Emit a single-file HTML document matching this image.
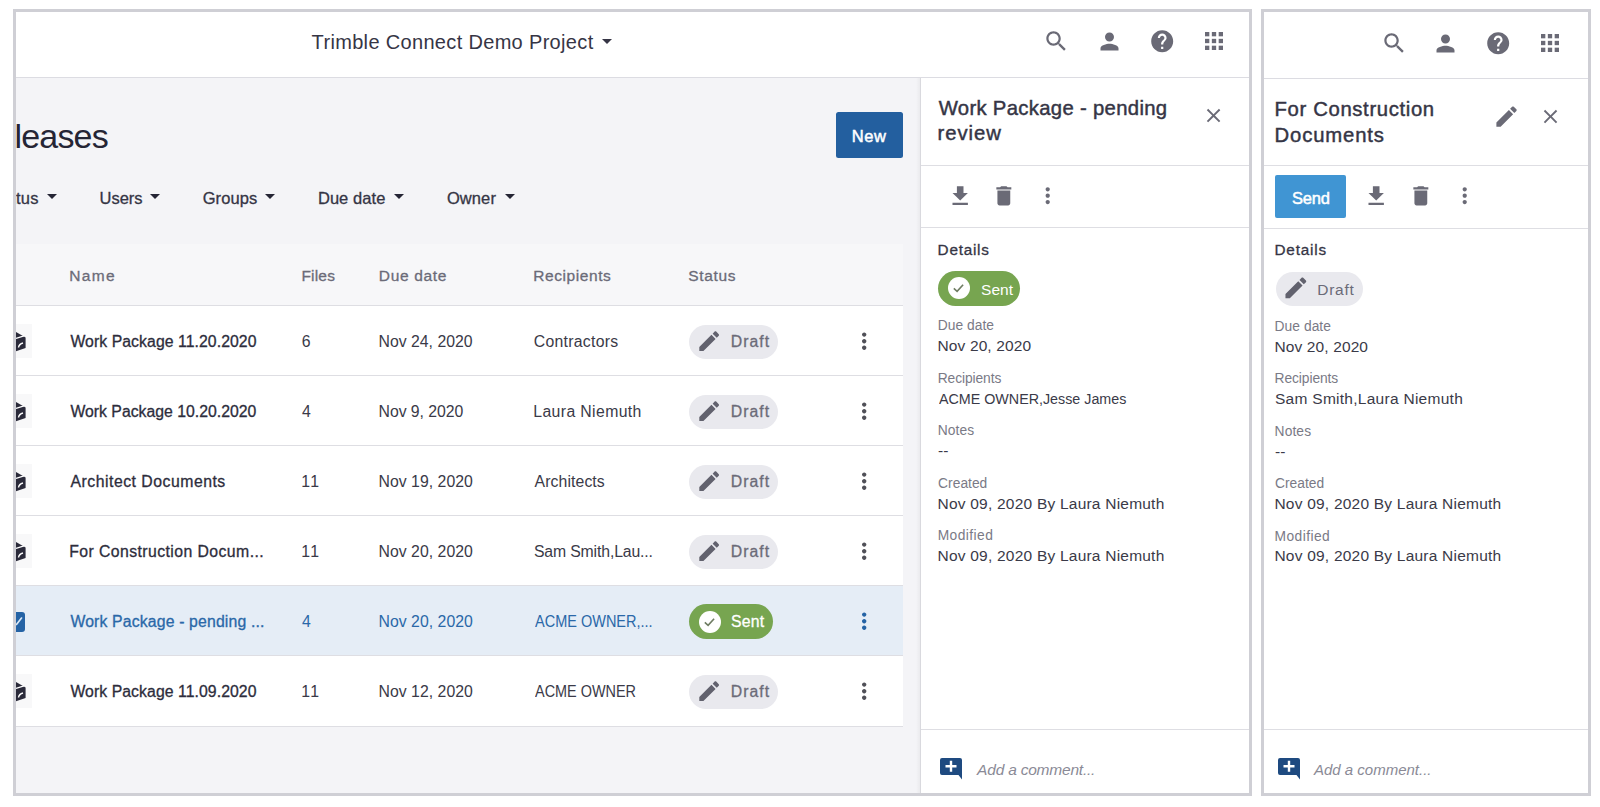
<!DOCTYPE html>
<html><head><meta charset="utf-8"><style>
html,body{margin:0;padding:0;width:1600px;height:807px;overflow:hidden;background:#ffffff;font-family:"Liberation Sans", sans-serif}
.t{position:absolute;white-space:nowrap}
.b{position:absolute}
</style></head><body>
<div class="b" style="left:13px;top:8.5px;width:1239px;height:787.5px;box-sizing:border-box;border:3px solid #cfcfd5;background:#fff"></div>
<div class="b" style="left:1261px;top:8.5px;width:330px;height:787.5px;box-sizing:border-box;border:3px solid #cfcfd5;background:#fff"></div>
<div class="t" style="left:311.60px;top:32.47px;font-size:20px;line-height:20px;color:#363545;letter-spacing:0.330px;">Trimble Connect Demo Project</div>
<svg class="b" style="left:602px;top:39px;width:10px;height:5px" viewBox="0 0 10 5"><path d="M0 0h10L5 5z" fill="#363545"/></svg>
<svg class="b" style="left:1043.17px;top:28.37px;width:26.64px;height:26.64px" viewBox="0 0 24 24"><path fill="#6a6a76" d="M15.5 14h-.79l-.28-.27C15.41 12.59 16 11.11 16 9.5 16 5.91 13.09 3 9.5 3S3 5.91 3 9.5 5.91 16 9.5 16c1.610 0 3.09-.59 4.23-1.57l.27.28v.79l5 4.99L20.49 19l-4.99-5zm-6 0C7.01 14 5 11.99 5 9.5S7.01 5 9.5 5 14 7.01 14 9.5 11.99 14 9.5 14z"/></svg>
<svg class="b" style="left:1095.50px;top:27.70px;width:27.00px;height:27.00px" viewBox="0 0 24 24"><path fill="#6a6a76" d="M12 12c2.21 0 4-1.79 4-4s-1.79-4-4-4-4 1.79-4 4 1.79 4 4 4zm0 2c-2.67 0-8 1.34-8 4v2h16v-2c0-2.660-5.33-4-8-4z"/></svg>
<svg class="b" style="left:1148.60px;top:28.00px;width:26.40px;height:26.40px" viewBox="0 0 24 24"><path fill="#6a6a76" d="M12 2C6.48 2 2 6.48 2 12s4.48 10 10 10 10-4.48 10-10S17.52 2 12 2zm1 17h-2v-2h2v2zm2.07-7.75l-.9.92C13.45 12.9 13 13.5 13 15h-2v-.5c0-1.1.45-2.1 1.17-2.83l1.24-1.26c.37-.36.59-.86.59-1.41 0-1.1-.9-2-2-2s-2 .9-2 2H8c0-2.21 1.79-4 4-4s4 1.79 4 4c0 .88-.36 1.68-.93 2.25z"/></svg>
<svg class="b" style="left:1205.4px;top:32.2px;width:18px;height:18px" viewBox="0 0 18 18" fill="#6a6a76"><rect x="0.00" y="0.00" width="4.32" height="4.32"/><rect x="6.84" y="0.00" width="4.32" height="4.32"/><rect x="13.68" y="0.00" width="4.32" height="4.32"/><rect x="0.00" y="6.84" width="4.32" height="4.32"/><rect x="6.84" y="6.84" width="4.32" height="4.32"/><rect x="13.68" y="6.84" width="4.32" height="4.32"/><rect x="0.00" y="13.68" width="4.32" height="4.32"/><rect x="6.84" y="13.68" width="4.32" height="4.32"/><rect x="13.68" y="13.68" width="4.32" height="4.32"/></svg>
<div class="b" style="left:16px;top:77px;width:1233px;height:1px;background:#dcdce2;"></div>
<div class="b" style="left:16px;top:78px;width:904px;height:715px;background:#f4f4f7;"></div>
<div class="b" style="left:16px;top:78px;width:904px;height:715px;overflow:hidden"><div class="t" style="left:-43.39px;top:41.02px;font-size:34px;line-height:34px;color:#252535;letter-spacing:-0.810px">Releases</div></div>
<div class="b" style="left:836px;top:112px;width:67px;height:46px;background:#235f9f;border-radius:2.5px"></div>
<div class="t" style="left:851.70px;top:127.63px;font-size:16.5px;line-height:16.5px;color:#ffffff;-webkit-text-stroke:0.5px #ffffff;letter-spacing:0.600px;">New</div>
<div class="t" style="left:99.56px;top:189.93px;font-size:16.5px;line-height:16.5px;color:#353545;-webkit-text-stroke:0.3px #353545;letter-spacing:-0.040px;">Users</div>
<div class="t" style="left:202.70px;top:189.93px;font-size:16.5px;line-height:16.5px;color:#353545;-webkit-text-stroke:0.3px #353545;letter-spacing:0.080px;">Groups</div>
<div class="t" style="left:317.90px;top:189.93px;font-size:16.5px;line-height:16.5px;color:#353545;-webkit-text-stroke:0.3px #353545;letter-spacing:0.071px;">Due date</div>
<div class="t" style="left:446.90px;top:189.93px;font-size:16.5px;line-height:16.5px;color:#353545;-webkit-text-stroke:0.3px #353545;letter-spacing:0.100px;">Owner</div>
<svg class="b" style="left:47px;top:194px;width:10px;height:5px" viewBox="0 0 10 5"><path d="M0 0h10L5 5z" fill="#252535"/></svg>
<svg class="b" style="left:150.4px;top:194px;width:10px;height:5px" viewBox="0 0 10 5"><path d="M0 0h10L5 5z" fill="#252535"/></svg>
<svg class="b" style="left:265.4px;top:194px;width:10px;height:5px" viewBox="0 0 10 5"><path d="M0 0h10L5 5z" fill="#252535"/></svg>
<svg class="b" style="left:393.7px;top:194px;width:10px;height:5px" viewBox="0 0 10 5"><path d="M0 0h10L5 5z" fill="#252535"/></svg>
<svg class="b" style="left:505.4px;top:194px;width:10px;height:5px" viewBox="0 0 10 5"><path d="M0 0h10L5 5z" fill="#252535"/></svg>
<div class="b" style="left:16px;top:170px;width:100px;height:50px;overflow:hidden"><div class="t" style="left:-25.70px;top:19.93px;font-size:16.5px;line-height:16.5px;-webkit-text-stroke:0.3px #353545;color:#353545;letter-spacing:0.3px">Status</div></div>
<div class="b" style="left:16px;top:244px;width:887px;height:62px;background:#f7f7f9;"></div>
<div class="t" style="left:69.20px;top:268.18px;font-size:15.5px;line-height:15.5px;color:#6b6b78;-webkit-text-stroke:0.3px #6b6b78;letter-spacing:1.400px;">Name</div>
<div class="t" style="left:301.45px;top:268.18px;font-size:15.5px;line-height:15.5px;color:#6b6b78;-webkit-text-stroke:0.3px #6b6b78;letter-spacing:0.187px;">Files</div>
<div class="t" style="left:378.80px;top:268.18px;font-size:15.5px;line-height:15.5px;color:#6b6b78;-webkit-text-stroke:0.3px #6b6b78;letter-spacing:0.671px;">Due date</div>
<div class="t" style="left:533.30px;top:268.18px;font-size:15.5px;line-height:15.5px;color:#6b6b78;-webkit-text-stroke:0.3px #6b6b78;letter-spacing:0.567px;">Recipients</div>
<div class="t" style="left:688.30px;top:268.18px;font-size:15.5px;line-height:15.5px;color:#6b6b78;-webkit-text-stroke:0.3px #6b6b78;letter-spacing:0.660px;">Status</div>
<div class="b" style="left:16px;top:306px;width:887px;height:70px;background:#ffffff;"></div>
<div class="b" style="left:16px;top:305px;width:887px;height:1px;background:#dedee3;"></div>
<div class="b" style="left:16px;top:324px;width:15.5px;height:34px;background:#f8f8f9;"></div>
<svg class="b" style="left:15.6px;top:331.6px;width:10px;height:20px" viewBox="0 0 10 20"><path d="M0 0L9.6 5.5V16L0 19.3z" fill="#2a2a3a"/><path d="M0 6.5L8 3.8" stroke="#fff" stroke-width="1.3"/><path d="M2.5 15.5C3 12.5 5 11.5 7 11" stroke="#fff" stroke-width="1.4" fill="none"/></svg>
<div class="t" style="left:70.40px;top:333.63px;font-size:15.8px;line-height:15.8px;color:#2d2d3c;-webkit-text-stroke:0.3px #2d2d3c;letter-spacing:0.064px;">Work Package 11.20.2020</div>
<div class="t" style="left:301.70px;top:333.63px;font-size:15.8px;line-height:15.8px;color:#3a3a48;">6</div>
<div class="t" style="left:378.50px;top:333.63px;font-size:15.8px;line-height:15.8px;color:#3a3a48;letter-spacing:0.009px;">Nov 24, 2020</div>
<div class="t" style="left:533.80px;top:333.63px;font-size:15.8px;line-height:15.8px;color:#3a3a48;letter-spacing:0.270px;">Contractors</div>
<div class="b" style="left:688.5px;top:324.5px;width:89px;height:34px;background:#e9e9ee;border-radius:17px"></div>
<svg class="b" style="left:695.70px;top:328.40px;width:26.40px;height:26.40px" viewBox="0 0 24 24"><path fill="#62626e" d="M3 17.25V21h3.75L17.81 9.94l-3.75-3.75L3 17.25zM20.71 7.04c.39-.39.39-1.02 0-1.41l-2.34-2.34c-.39-.39-1.02-.39-1.41 0l-1.83 1.83 3.75 3.75 1.83-1.83z"/></svg>
<div class="t" style="left:730.70px;top:333.63px;font-size:15.8px;line-height:15.8px;color:#6b6b78;-webkit-text-stroke:0.3px #6b6b78;letter-spacing:1.050px;">Draft</div>
<svg class="b" style="left:850.60px;top:328.00px;width:26.40px;height:26.40px" viewBox="0 0 24 24"><path fill="#505058" d="M12 8c1.1 0 2-.9 2-2s-.9-2-2-2-2 .9-2 2 .9 2 2 2zm0 2c-1.1 0-2 .9-2 2s.9 2 2 2 2-.9 2-2-.9-2-2-2zm0 6c-1.1 0-2 .9-2 2s.9 2 2 2 2-.9 2-2-.9-2-2-2z"/></svg>
<div class="b" style="left:16px;top:376px;width:887px;height:70px;background:#ffffff;"></div>
<div class="b" style="left:16px;top:375px;width:887px;height:1px;background:#dedee3;"></div>
<div class="b" style="left:16px;top:394px;width:15.5px;height:34px;background:#f8f8f9;"></div>
<svg class="b" style="left:15.6px;top:401.6px;width:10px;height:20px" viewBox="0 0 10 20"><path d="M0 0L9.6 5.5V16L0 19.3z" fill="#2a2a3a"/><path d="M0 6.5L8 3.8" stroke="#fff" stroke-width="1.3"/><path d="M2.5 15.5C3 12.5 5 11.5 7 11" stroke="#fff" stroke-width="1.4" fill="none"/></svg>
<div class="t" style="left:70.40px;top:403.63px;font-size:15.8px;line-height:15.8px;color:#2d2d3c;-webkit-text-stroke:0.3px #2d2d3c;letter-spacing:0.005px;">Work Package 10.20.2020</div>
<div class="t" style="left:302.10px;top:403.63px;font-size:15.8px;line-height:15.8px;color:#3a3a48;">4</div>
<div class="t" style="left:378.50px;top:403.63px;font-size:15.8px;line-height:15.8px;color:#3a3a48;letter-spacing:-0.030px;">Nov 9, 2020</div>
<div class="t" style="left:533.30px;top:403.63px;font-size:15.8px;line-height:15.8px;color:#3a3a48;letter-spacing:0.375px;">Laura Niemuth</div>
<div class="b" style="left:688.5px;top:394.5px;width:89px;height:34px;background:#e9e9ee;border-radius:17px"></div>
<svg class="b" style="left:695.70px;top:398.40px;width:26.40px;height:26.40px" viewBox="0 0 24 24"><path fill="#62626e" d="M3 17.25V21h3.75L17.81 9.94l-3.75-3.75L3 17.25zM20.71 7.04c.39-.39.39-1.02 0-1.41l-2.34-2.34c-.39-.39-1.02-.39-1.41 0l-1.83 1.83 3.75 3.75 1.83-1.83z"/></svg>
<div class="t" style="left:730.70px;top:403.63px;font-size:15.8px;line-height:15.8px;color:#6b6b78;-webkit-text-stroke:0.3px #6b6b78;letter-spacing:1.050px;">Draft</div>
<svg class="b" style="left:850.60px;top:398.00px;width:26.40px;height:26.40px" viewBox="0 0 24 24"><path fill="#505058" d="M12 8c1.1 0 2-.9 2-2s-.9-2-2-2-2 .9-2 2 .9 2 2 2zm0 2c-1.1 0-2 .9-2 2s.9 2 2 2 2-.9 2-2-.9-2-2-2zm0 6c-1.1 0-2 .9-2 2s.9 2 2 2 2-.9 2-2-.9-2-2-2z"/></svg>
<div class="b" style="left:16px;top:446px;width:887px;height:70px;background:#ffffff;"></div>
<div class="b" style="left:16px;top:445px;width:887px;height:1px;background:#dedee3;"></div>
<div class="b" style="left:16px;top:464px;width:15.5px;height:34px;background:#f8f8f9;"></div>
<svg class="b" style="left:15.6px;top:471.6px;width:10px;height:20px" viewBox="0 0 10 20"><path d="M0 0L9.6 5.5V16L0 19.3z" fill="#2a2a3a"/><path d="M0 6.5L8 3.8" stroke="#fff" stroke-width="1.3"/><path d="M2.5 15.5C3 12.5 5 11.5 7 11" stroke="#fff" stroke-width="1.4" fill="none"/></svg>
<div class="t" style="left:70.50px;top:473.63px;font-size:15.8px;line-height:15.8px;color:#2d2d3c;-webkit-text-stroke:0.3px #2d2d3c;letter-spacing:0.500px;">Architect Documents</div>
<div class="t" style="left:301.30px;top:473.63px;font-size:15.8px;line-height:15.8px;color:#3a3a48;letter-spacing:1.400px;">11</div>
<div class="t" style="left:378.50px;top:473.63px;font-size:15.8px;line-height:15.8px;color:#3a3a48;letter-spacing:0.036px;">Nov 19, 2020</div>
<div class="t" style="left:534.60px;top:473.63px;font-size:15.8px;line-height:15.8px;color:#3a3a48;letter-spacing:0.089px;">Architects</div>
<div class="b" style="left:688.5px;top:464.5px;width:89px;height:34px;background:#e9e9ee;border-radius:17px"></div>
<svg class="b" style="left:695.70px;top:468.40px;width:26.40px;height:26.40px" viewBox="0 0 24 24"><path fill="#62626e" d="M3 17.25V21h3.75L17.81 9.94l-3.75-3.75L3 17.25zM20.71 7.04c.39-.39.39-1.02 0-1.41l-2.34-2.34c-.39-.39-1.02-.39-1.41 0l-1.83 1.83 3.75 3.75 1.83-1.83z"/></svg>
<div class="t" style="left:730.70px;top:473.63px;font-size:15.8px;line-height:15.8px;color:#6b6b78;-webkit-text-stroke:0.3px #6b6b78;letter-spacing:1.050px;">Draft</div>
<svg class="b" style="left:850.60px;top:468.00px;width:26.40px;height:26.40px" viewBox="0 0 24 24"><path fill="#505058" d="M12 8c1.1 0 2-.9 2-2s-.9-2-2-2-2 .9-2 2 .9 2 2 2zm0 2c-1.1 0-2 .9-2 2s.9 2 2 2 2-.9 2-2-.9-2-2-2zm0 6c-1.1 0-2 .9-2 2s.9 2 2 2 2-.9 2-2-.9-2-2-2z"/></svg>
<div class="b" style="left:16px;top:516px;width:887px;height:70px;background:#ffffff;"></div>
<div class="b" style="left:16px;top:515px;width:887px;height:1px;background:#dedee3;"></div>
<div class="b" style="left:16px;top:534px;width:15.5px;height:34px;background:#f8f8f9;"></div>
<svg class="b" style="left:15.6px;top:541.6px;width:10px;height:20px" viewBox="0 0 10 20"><path d="M0 0L9.6 5.5V16L0 19.3z" fill="#2a2a3a"/><path d="M0 6.5L8 3.8" stroke="#fff" stroke-width="1.3"/><path d="M2.5 15.5C3 12.5 5 11.5 7 11" stroke="#fff" stroke-width="1.4" fill="none"/></svg>
<div class="t" style="left:69.20px;top:543.63px;font-size:15.8px;line-height:15.8px;color:#2d2d3c;-webkit-text-stroke:0.3px #2d2d3c;letter-spacing:0.421px;">For Construction Docum...</div>
<div class="t" style="left:301.30px;top:543.63px;font-size:15.8px;line-height:15.8px;color:#3a3a48;letter-spacing:1.400px;">11</div>
<div class="t" style="left:378.50px;top:543.63px;font-size:15.8px;line-height:15.8px;color:#3a3a48;letter-spacing:0.036px;">Nov 20, 2020</div>
<div class="t" style="left:533.90px;top:543.63px;font-size:15.8px;line-height:15.8px;color:#3a3a48;letter-spacing:-0.140px;">Sam Smith,Lau...</div>
<div class="b" style="left:688.5px;top:534.5px;width:89px;height:34px;background:#e9e9ee;border-radius:17px"></div>
<svg class="b" style="left:695.70px;top:538.40px;width:26.40px;height:26.40px" viewBox="0 0 24 24"><path fill="#62626e" d="M3 17.25V21h3.75L17.81 9.94l-3.75-3.75L3 17.25zM20.71 7.04c.39-.39.39-1.02 0-1.41l-2.34-2.34c-.39-.39-1.02-.39-1.41 0l-1.83 1.83 3.75 3.75 1.83-1.83z"/></svg>
<div class="t" style="left:730.70px;top:543.63px;font-size:15.8px;line-height:15.8px;color:#6b6b78;-webkit-text-stroke:0.3px #6b6b78;letter-spacing:1.050px;">Draft</div>
<svg class="b" style="left:850.60px;top:538.00px;width:26.40px;height:26.40px" viewBox="0 0 24 24"><path fill="#505058" d="M12 8c1.1 0 2-.9 2-2s-.9-2-2-2-2 .9-2 2 .9 2 2 2zm0 2c-1.1 0-2 .9-2 2s.9 2 2 2 2-.9 2-2-.9-2-2-2zm0 6c-1.1 0-2 .9-2 2s.9 2 2 2 2-.9 2-2-.9-2-2-2z"/></svg>
<div class="b" style="left:16px;top:586px;width:887px;height:70px;background:#e5edf6;"></div>
<div class="b" style="left:16px;top:585px;width:887px;height:1px;background:#dedee3;"></div>
<svg class="b" style="left:15.7px;top:611.6px;width:9px;height:20px" viewBox="0 0 9 20"><path d="M0 0h6a3 3 0 0 1 3 3v14a3 3 0 0 1-3 3H0z" fill="#2563a5"/><path d="M0.5 12.5L5.5 6" stroke="#dbe9f7" stroke-width="1.6" stroke-linecap="round"/></svg>
<div class="t" style="left:70.40px;top:613.63px;font-size:15.8px;line-height:15.8px;color:#2a68a8;-webkit-text-stroke:0.3px #2a68a8;letter-spacing:0.148px;">Work Package - pending ...</div>
<div class="t" style="left:302.10px;top:613.63px;font-size:15.8px;line-height:15.8px;color:#2a68a8;">4</div>
<div class="t" style="left:378.50px;top:613.63px;font-size:15.8px;line-height:15.8px;color:#2a68a8;letter-spacing:0.036px;">Nov 20, 2020</div>
<div class="t" style="left:534.60px;top:613.63px;font-size:15.8px;line-height:15.8px;color:#2a68a8;transform:scaleX(0.9180);transform-origin:0 0;">ACME OWNER,...</div>
<div class="b" style="left:688.8px;top:604.4px;width:84.2px;height:35px;background:#77a550;border-radius:17.5px"></div>
<svg class="b" style="left:698.8px;top:610.9px;width:22px;height:22px" viewBox="0 0 22 22"><circle cx="11" cy="11" r="11" fill="#fff"/><path d="M5.8 11.4l3.3 3 6-6.6" stroke="#6e7c62" stroke-width="1.6" fill="none"/></svg>
<div class="t" style="left:731.00px;top:613.63px;font-size:15.8px;line-height:15.8px;color:#ffffff;-webkit-text-stroke:0.3px #ffffff;letter-spacing:0.200px;">Sent</div>
<svg class="b" style="left:850.60px;top:608.00px;width:26.40px;height:26.40px" viewBox="0 0 24 24"><path fill="#2563a5" d="M12 8c1.1 0 2-.9 2-2s-.9-2-2-2-2 .9-2 2 .9 2 2 2zm0 2c-1.1 0-2 .9-2 2s.9 2 2 2 2-.9 2-2-.9-2-2-2zm0 6c-1.1 0-2 .9-2 2s.9 2 2 2 2-.9 2-2-.9-2-2-2z"/></svg>
<div class="b" style="left:16px;top:656px;width:887px;height:70px;background:#ffffff;"></div>
<div class="b" style="left:16px;top:655px;width:887px;height:1px;background:#dedee3;"></div>
<div class="b" style="left:16px;top:674px;width:15.5px;height:34px;background:#f8f8f9;"></div>
<svg class="b" style="left:15.6px;top:681.6px;width:10px;height:20px" viewBox="0 0 10 20"><path d="M0 0L9.6 5.5V16L0 19.3z" fill="#2a2a3a"/><path d="M0 6.5L8 3.8" stroke="#fff" stroke-width="1.3"/><path d="M2.5 15.5C3 12.5 5 11.5 7 11" stroke="#fff" stroke-width="1.4" fill="none"/></svg>
<div class="t" style="left:70.40px;top:683.63px;font-size:15.8px;line-height:15.8px;color:#2d2d3c;-webkit-text-stroke:0.3px #2d2d3c;letter-spacing:0.064px;">Work Package 11.09.2020</div>
<div class="t" style="left:301.30px;top:683.63px;font-size:15.8px;line-height:15.8px;color:#3a3a48;letter-spacing:1.400px;">11</div>
<div class="t" style="left:378.50px;top:683.63px;font-size:15.8px;line-height:15.8px;color:#3a3a48;letter-spacing:0.036px;">Nov 12, 2020</div>
<div class="t" style="left:534.60px;top:683.63px;font-size:15.8px;line-height:15.8px;color:#3a3a48;transform:scaleX(0.9136);transform-origin:0 0;">ACME OWNER</div>
<div class="b" style="left:688.5px;top:674.5px;width:89px;height:34px;background:#e9e9ee;border-radius:17px"></div>
<svg class="b" style="left:695.70px;top:678.40px;width:26.40px;height:26.40px" viewBox="0 0 24 24"><path fill="#62626e" d="M3 17.25V21h3.75L17.81 9.94l-3.75-3.75L3 17.25zM20.71 7.04c.39-.39.39-1.02 0-1.41l-2.34-2.34c-.39-.39-1.02-.39-1.41 0l-1.83 1.83 3.75 3.75 1.83-1.83z"/></svg>
<div class="t" style="left:730.70px;top:683.63px;font-size:15.8px;line-height:15.8px;color:#6b6b78;-webkit-text-stroke:0.3px #6b6b78;letter-spacing:1.050px;">Draft</div>
<svg class="b" style="left:850.60px;top:678.00px;width:26.40px;height:26.40px" viewBox="0 0 24 24"><path fill="#505058" d="M12 8c1.1 0 2-.9 2-2s-.9-2-2-2-2 .9-2 2 .9 2 2 2zm0 2c-1.1 0-2 .9-2 2s.9 2 2 2 2-.9 2-2-.9-2-2-2zm0 6c-1.1 0-2 .9-2 2s.9 2 2 2 2-.9 2-2-.9-2-2-2z"/></svg>
<div class="b" style="left:16px;top:726px;width:887px;height:1px;background:#dedee3;"></div>
<div class="b" style="left:916px;top:78px;width:4px;height:715px;background:linear-gradient(to right, rgba(0,0,0,0), rgba(0,0,0,0.04))"></div>
<div class="b" style="left:920px;top:78px;width:1px;height:715px;background:#d9d9de;"></div>
<div class="t" style="left:938.70px;top:98.12px;font-size:20.3px;line-height:20.3px;color:#353545;-webkit-text-stroke:0.45px #353545;letter-spacing:0.319px;">Work Package - pending</div>
<div class="t" style="left:937.50px;top:123.02px;font-size:20.3px;line-height:20.3px;color:#353545;-webkit-text-stroke:0.45px #353545;letter-spacing:0.960px;">review</div>
<svg class="b" style="left:1202.48px;top:104.18px;width:23.14px;height:23.14px" viewBox="0 0 24 24"><path fill="#6a6a76" d="M19 6.41L17.59 5 12 10.59 6.41 5 5 6.41 10.59 12 5 17.59 6.41 19 12 13.41 17.59 19 19 17.59 13.41 12z"/></svg>
<div class="b" style="left:921px;top:165px;width:328px;height:1px;background:#dedee3;"></div>
<svg class="b" style="left:946.50px;top:182.70px;width:26.40px;height:26.40px" viewBox="0 0 24 24"><path fill="#6a6a76" d="M19 9h-4V3H9v6H5l7 7 7-7zM5 18v2h14v-2H5z"/></svg>
<svg class="b" style="left:990.95px;top:182.79px;width:25.68px;height:25.68px" viewBox="0 0 24 24"><path fill="#6a6a76" d="M6 19c0 1.1.9 2 2 2h8c1.1 0 2-.9 2-2V7H6v12zM19 4h-3.5l-1-1h-5l-1 1H5v2h14V4z"/></svg>
<svg class="b" style="left:1035.18px;top:182.76px;width:25.44px;height:25.44px" viewBox="0 0 24 24"><path fill="#6a6a76" d="M12 8c1.1 0 2-.9 2-2s-.9-2-2-2-2 .9-2 2 .9 2 2 2zm0 2c-1.1 0-2 .9-2 2s.9 2 2 2 2-.9 2-2-.9-2-2-2zm0 6c-1.1 0-2 .9-2 2s.9 2 2 2 2-.9 2-2-.9-2-2-2z"/></svg>
<div class="b" style="left:921px;top:227px;width:328px;height:1px;background:#dedee3;"></div>
<div class="t" style="left:937.60px;top:241.75px;font-size:15.3px;line-height:15.3px;color:#353545;-webkit-text-stroke:0.3px #353545;letter-spacing:0.750px;">Details</div>
<div class="b" style="left:938.4px;top:270.5px;width:81.6px;height:35px;background:#77a550;border-radius:17.5px"></div>
<svg class="b" style="left:948.3px;top:277px;width:22px;height:22px" viewBox="0 0 22 22"><circle cx="11" cy="11" r="11" fill="#fff"/><path d="M5.8 11.4l3.3 3 6-6.6" stroke="#6e7c62" stroke-width="1.6" fill="none"/></svg>
<div class="t" style="left:981.00px;top:281.88px;font-size:15.5px;line-height:15.5px;color:#ffffff;letter-spacing:0.067px;">Sent</div>
<div class="t" style="left:937.70px;top:319.22px;font-size:13.8px;line-height:13.8px;color:#7a7a86;letter-spacing:0.043px;">Due date</div>
<div class="t" style="left:937.50px;top:338.18px;font-size:15.5px;line-height:15.5px;color:#3a3a48;letter-spacing:0.127px;">Nov 20, 2020</div>
<div class="t" style="left:937.70px;top:371.67px;font-size:13.8px;line-height:13.8px;color:#7a7a86;letter-spacing:-0.089px;">Recipients</div>
<div class="t" style="left:938.80px;top:390.63px;font-size:15.5px;line-height:15.5px;color:#3a3a48;transform:scaleX(0.9216);transform-origin:0 0;">ACME OWNER,Jesse James</div>
<div class="t" style="left:937.70px;top:424.12px;font-size:13.8px;line-height:13.8px;color:#7a7a86;letter-spacing:0.100px;">Notes</div>
<div class="t" style="left:938.10px;top:443.08px;font-size:15.5px;line-height:15.5px;color:#3a3a48;">--</div>
<div class="t" style="left:938.10px;top:476.57px;font-size:13.8px;line-height:13.8px;color:#7a7a86;letter-spacing:0.017px;">Created</div>
<div class="t" style="left:937.50px;top:495.53px;font-size:15.5px;line-height:15.5px;color:#3a3a48;letter-spacing:0.221px;">Nov 09, 2020 By Laura Niemuth</div>
<div class="t" style="left:937.70px;top:529.02px;font-size:13.8px;line-height:13.8px;color:#7a7a86;letter-spacing:0.429px;">Modified</div>
<div class="t" style="left:937.50px;top:547.98px;font-size:15.5px;line-height:15.5px;color:#3a3a48;letter-spacing:0.221px;">Nov 09, 2020 By Laura Niemuth</div>
<div class="b" style="left:921px;top:729px;width:328px;height:1px;background:#dedee3;"></div>
<svg class="b" style="left:940.4px;top:757.9px;width:22px;height:22px" viewBox="0 0 22 22"><path d="M2 0h18a2 2 0 0 1 2 2v19.5L18.5 17H2a2 2 0 0 1-2-2V2a2 2 0 0 1 2-2z" fill="#1e4a80"/><path d="M11 2.8v11M5.5 8.3h11" stroke="#fff" stroke-width="2.4"/></svg>
<div class="t" style="left:977.10px;top:761.58px;font-size:15.5px;line-height:15.5px;color:#8a8a96;letter-spacing:-0.213px;font-style:italic;">Add a comment...</div>
<svg class="b" style="left:1380.67px;top:30.17px;width:26.64px;height:26.64px" viewBox="0 0 24 24"><path fill="#6a6a76" d="M15.5 14h-.79l-.28-.27C15.41 12.59 16 11.11 16 9.5 16 5.91 13.09 3 9.5 3S3 5.91 3 9.5 5.91 16 9.5 16c1.610 0 3.09-.59 4.23-1.57l.27.28v.79l5 4.99L20.49 19l-4.99-5zm-6 0C7.01 14 5 11.99 5 9.5S7.01 5 9.5 5 14 7.01 14 9.5 11.99 14 9.5 14z"/></svg>
<svg class="b" style="left:1432.00px;top:29.50px;width:27.00px;height:27.00px" viewBox="0 0 24 24"><path fill="#6a6a76" d="M12 12c2.21 0 4-1.79 4-4s-1.79-4-4-4-4 1.79-4 4 1.79 4 4 4zm0 2c-2.67 0-8 1.34-8 4v2h16v-2c0-2.660-5.33-4-8-4z"/></svg>
<svg class="b" style="left:1485.10px;top:29.80px;width:26.40px;height:26.40px" viewBox="0 0 24 24"><path fill="#6a6a76" d="M12 2C6.48 2 2 6.48 2 12s4.48 10 10 10 10-4.48 10-10S17.52 2 12 2zm1 17h-2v-2h2v2zm2.07-7.75l-.9.92C13.45 12.9 13 13.5 13 15h-2v-.5c0-1.1.45-2.1 1.17-2.83l1.24-1.26c.37-.36.59-.86.59-1.41 0-1.1-.9-2-2-2s-2 .9-2 2H8c0-2.21 1.79-4 4-4s4 1.79 4 4c0 .88-.36 1.68-.93 2.25z"/></svg>
<svg class="b" style="left:1541.4px;top:34.0px;width:18px;height:18px" viewBox="0 0 18 18" fill="#6a6a76"><rect x="0.00" y="0.00" width="4.32" height="4.32"/><rect x="6.84" y="0.00" width="4.32" height="4.32"/><rect x="13.68" y="0.00" width="4.32" height="4.32"/><rect x="0.00" y="6.84" width="4.32" height="4.32"/><rect x="6.84" y="6.84" width="4.32" height="4.32"/><rect x="13.68" y="6.84" width="4.32" height="4.32"/><rect x="0.00" y="13.68" width="4.32" height="4.32"/><rect x="6.84" y="13.68" width="4.32" height="4.32"/><rect x="13.68" y="13.68" width="4.32" height="4.32"/></svg>
<div class="b" style="left:1264px;top:78px;width:324px;height:1px;background:#dcdce2;"></div>
<div class="t" style="left:1274.60px;top:98.82px;font-size:20.3px;line-height:20.3px;color:#353545;-webkit-text-stroke:0.45px #353545;letter-spacing:0.640px;">For Construction</div>
<div class="t" style="left:1274.60px;top:125.42px;font-size:20.3px;line-height:20.3px;color:#353545;-webkit-text-stroke:0.45px #353545;letter-spacing:0.838px;">Documents</div>
<svg class="b" style="left:1493.01px;top:102.91px;width:27.12px;height:27.12px" viewBox="0 0 24 24"><path fill="#6a6a76" d="M3 17.25V21h3.75L17.81 9.94l-3.75-3.75L3 17.25zM20.71 7.04c.39-.39.39-1.02 0-1.41l-2.34-2.34c-.39-.39-1.02-.39-1.41 0l-1.83 1.83 3.75 3.75 1.83-1.83z"/></svg>
<svg class="b" style="left:1539.00px;top:105.00px;width:23.04px;height:23.04px" viewBox="0 0 24 24"><path fill="#6a6a76" d="M19 6.41L17.59 5 12 10.59 6.41 5 5 6.41 10.59 12 5 17.59 6.41 19 12 13.41 17.59 19 19 17.59 13.41 12z"/></svg>
<div class="b" style="left:1264px;top:165px;width:324px;height:1px;background:#dedee3;"></div>
<div class="b" style="left:1275.4px;top:175.4px;width:70.6px;height:42.8px;background:#4095d3;border-radius:2px"></div>
<div class="t" style="left:1292.00px;top:190.03px;font-size:16.5px;line-height:16.5px;color:#ffffff;-webkit-text-stroke:0.5px #ffffff;letter-spacing:-0.167px;">Send</div>
<svg class="b" style="left:1363.10px;top:182.70px;width:26.40px;height:26.40px" viewBox="0 0 24 24"><path fill="#6a6a76" d="M19 9h-4V3H9v6H5l7 7 7-7zM5 18v2h14v-2H5z"/></svg>
<svg class="b" style="left:1407.65px;top:182.79px;width:25.68px;height:25.68px" viewBox="0 0 24 24"><path fill="#6a6a76" d="M6 19c0 1.1.9 2 2 2h8c1.1 0 2-.9 2-2V7H6v12zM19 4h-3.5l-1-1h-5l-1 1H5v2h14V4z"/></svg>
<svg class="b" style="left:1451.78px;top:182.76px;width:25.44px;height:25.44px" viewBox="0 0 24 24"><path fill="#6a6a76" d="M12 8c1.1 0 2-.9 2-2s-.9-2-2-2-2 .9-2 2 .9 2 2 2zm0 2c-1.1 0-2 .9-2 2s.9 2 2 2 2-.9 2-2-.9-2-2-2zm0 6c-1.1 0-2 .9-2 2s.9 2 2 2 2-.9 2-2-.9-2-2-2z"/></svg>
<div class="b" style="left:1264px;top:228px;width:324px;height:1px;background:#dedee3;"></div>
<div class="t" style="left:1274.50px;top:242.45px;font-size:15.3px;line-height:15.3px;color:#353545;-webkit-text-stroke:0.3px #353545;letter-spacing:0.817px;">Details</div>
<div class="b" style="left:1275.7px;top:271.7px;width:87.1px;height:34.1px;background:#e9e9ee;border-radius:17px"></div>
<svg class="b" style="left:1282.04px;top:274.04px;width:27.72px;height:27.72px" viewBox="0 0 24 24"><path fill="#62626e" d="M3 17.25V21h3.75L17.81 9.94l-3.75-3.75L3 17.25zM20.71 7.04c.39-.39.39-1.02 0-1.41l-2.34-2.34c-.39-.39-1.02-.39-1.41 0l-1.83 1.83 3.75 3.75 1.83-1.83z"/></svg>
<div class="t" style="left:1317.20px;top:282.38px;font-size:15.5px;line-height:15.5px;color:#6b6b78;letter-spacing:0.775px;">Draft</div>
<div class="t" style="left:1274.60px;top:319.72px;font-size:13.8px;line-height:13.8px;color:#7a7a86;letter-spacing:0.043px;">Due date</div>
<div class="t" style="left:1274.40px;top:338.68px;font-size:15.5px;line-height:15.5px;color:#3a3a48;letter-spacing:0.127px;">Nov 20, 2020</div>
<div class="t" style="left:1274.60px;top:372.17px;font-size:13.8px;line-height:13.8px;color:#7a7a86;letter-spacing:-0.089px;">Recipients</div>
<div class="t" style="left:1275.00px;top:391.13px;font-size:15.5px;line-height:15.5px;color:#3a3a48;letter-spacing:0.273px;">Sam Smith,Laura Niemuth</div>
<div class="t" style="left:1274.60px;top:424.62px;font-size:13.8px;line-height:13.8px;color:#7a7a86;letter-spacing:0.100px;">Notes</div>
<div class="t" style="left:1275.00px;top:443.58px;font-size:15.5px;line-height:15.5px;color:#3a3a48;">--</div>
<div class="t" style="left:1275.00px;top:477.07px;font-size:13.8px;line-height:13.8px;color:#7a7a86;letter-spacing:0.017px;">Created</div>
<div class="t" style="left:1274.40px;top:496.03px;font-size:15.5px;line-height:15.5px;color:#3a3a48;letter-spacing:0.221px;">Nov 09, 2020 By Laura Niemuth</div>
<div class="t" style="left:1274.60px;top:529.52px;font-size:13.8px;line-height:13.8px;color:#7a7a86;letter-spacing:0.429px;">Modified</div>
<div class="t" style="left:1274.40px;top:548.48px;font-size:15.5px;line-height:15.5px;color:#3a3a48;letter-spacing:0.221px;">Nov 09, 2020 By Laura Niemuth</div>
<div class="b" style="left:1264px;top:728.7px;width:324px;height:1px;background:#dedee3;"></div>
<svg class="b" style="left:1277.6px;top:757.8px;width:22px;height:22px" viewBox="0 0 22 22"><path d="M2 0h18a2 2 0 0 1 2 2v19.5L18.5 17H2a2 2 0 0 1-2-2V2a2 2 0 0 1 2-2z" fill="#1e4a80"/><path d="M11 2.8v11M5.5 8.3h11" stroke="#fff" stroke-width="2.4"/></svg>
<div class="t" style="left:1314.28px;top:761.58px;font-size:15.5px;line-height:15.5px;color:#8a8a96;transform:scaleX(0.9676);transform-origin:0 0;font-style:italic;">Add a comment...</div>
</body></html>
